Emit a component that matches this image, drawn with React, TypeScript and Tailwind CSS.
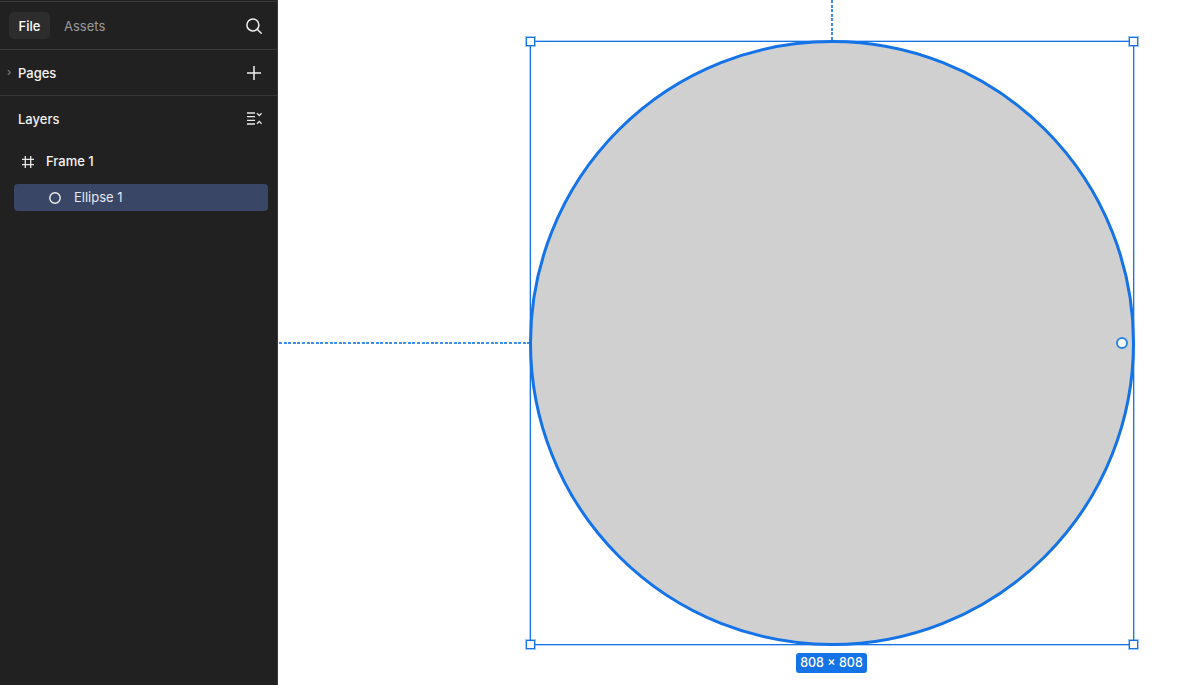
import React from 'react';

function SearchIcon() {
  return (
    <svg width="16" height="16" viewBox="0 0 16 16" fill="none" stroke="#f0f0f0" strokeWidth="1.5" className="block">
      <circle cx="6.9" cy="6.9" r="6" />
      <path d="M11 11l4.6 4.6" />
    </svg>
  );
}

function PlusIcon() {
  return (
    <svg width="14" height="14" viewBox="0 0 14 14" fill="none" stroke="#f0f0f0" strokeWidth="1.5" className="block">
      <path d="M7 0v14M0 7h14" />
    </svg>
  );
}

function CollapseIcon() {
  return (
    <svg width="15" height="13" viewBox="0 0 15 13" fill="none" stroke="#e8e8e8" strokeWidth="1.3" className="block">
      <path d="M0 1h8M0 4.7h8M0 8.3h8M0 12h8" />
      <path d="M10 1.3l2.3 2.3 2.3-2.3M10 11.7l2.3-2.3 2.3 2.3" />
    </svg>
  );
}

function FrameIcon() {
  return (
    <svg width="12" height="12" viewBox="0 0 12 12" fill="none" stroke="#e8e8e8" strokeWidth="1.3" className="block">
      <path d="M3.3 0v12M8.7 0v12M0 3.3h12M0 8.7h12" />
    </svg>
  );
}

function EllipseIcon() {
  return (
    <svg width="12" height="12" viewBox="0 0 12 12" fill="none" stroke="#f0f0f0" strokeWidth="1.4" className="block">
      <circle cx="6" cy="6" r="5.2" />
    </svg>
  );
}

function Handle({ className }: { className: string }) {
  return <div className={`absolute w-[9px] h-[9px] bg-white border border-[#1473e6] shadow-[0_0_0_1px_#1473e666] ${className}`} />;
}

export default function App() {
  return (
    <div className="flex h-[685px] w-[1200px] overflow-hidden bg-white font-['Inter',sans-serif]">
      {/* Sidebar */}
      <aside className="flex w-[278px] shrink-0 flex-col border-r border-[#3a3a3a] bg-[#212121] pt-[1px]">
        <div className="flex h-[49px] items-center border-y border-y-[#383838] pl-[9px] pr-[15px]">
          <div className="flex h-[27px] w-[41px] items-center justify-center rounded-[5px] bg-[#2d2d2d] pt-[2px] text-[13px] font-medium text-white">File</div>
          <div className="ml-[14px] pt-[2px] text-[13px] text-[#9a9a9a]">Assets</div>
          <div className="ml-auto">
            <SearchIcon />
          </div>
        </div>

        <div className="flex h-[46px] items-center border-b border-[#383838] pr-[16px]">
          <span className="w-[18px] pl-[7px] text-[11px] leading-none text-[#8a8a8a]">›</span>
          <span className="pt-[2px] text-[13px] font-medium text-[#f5f5f5]">Pages</span>
          <div className="ml-auto">
            <PlusIcon />
          </div>
        </div>

        <div className="flex h-[46px] items-center pb-[1px] pl-[18px] pr-[15px]">
          <span className="pt-[2px] text-[13px] font-medium text-[#f0f0f0]">Layers</span>
          <div className="ml-auto">
            <CollapseIcon />
          </div>
        </div>

        <div className="flex h-[42px] items-center pl-[22px] pb-[3px]">
          <FrameIcon />
          <span className="ml-[12px] text-[13px] font-medium text-[#f5f5f5]">Frame 1</span>
        </div>

        <div className="mx-[14px] flex h-[27px] w-[254px] items-center rounded-[4px] bg-[#3a4665] pl-[35px]">
          <EllipseIcon />
          <span className="ml-[13px] text-[13px] text-[#e4e7ef]">Ellipse 1</span>
        </div>
      </aside>

      {/* Canvas */}
      <main className="relative flex-1">
        <div className="absolute left-[553px] top-0 h-[40px] w-[2px] bg-[repeating-linear-gradient(180deg,#3f8eee_0_3px,transparent_3px_4.6px)]" />
        <div className="absolute left-[1px] top-[342px] h-[2px] w-[250px] bg-[repeating-linear-gradient(90deg,#3f8eee_0_3px,transparent_3px_4.6px)]" />

        <div className="absolute left-[251px] top-[40px] h-[606px] w-[606px] rounded-full border-[3px] border-[#1473e6] bg-[#d0d0d0]" />
        <div className="absolute left-[252px] top-[41px] h-[604px] w-[604px] border border-[#1473e6] shadow-[0_0_0_1px_#1473e655]" />

        <Handle className="left-[248px] top-[37px]" />
        <Handle className="left-[851px] top-[37px]" />
        <Handle className="left-[248px] top-[640px]" />
        <Handle className="left-[851px] top-[640px]" />

        <div className="absolute left-[838px] top-[337px] h-[12px] w-[12px] rounded-full border-2 border-[#2a82ea] bg-white" />

        <div className="absolute left-[518px] top-[653px] flex h-[20px] w-[71px] items-center justify-center rounded-[3px] bg-[#1473e6] text-[12.5px] font-medium text-white">
          808 × 808
        </div>
      </main>
    </div>
  );
}
